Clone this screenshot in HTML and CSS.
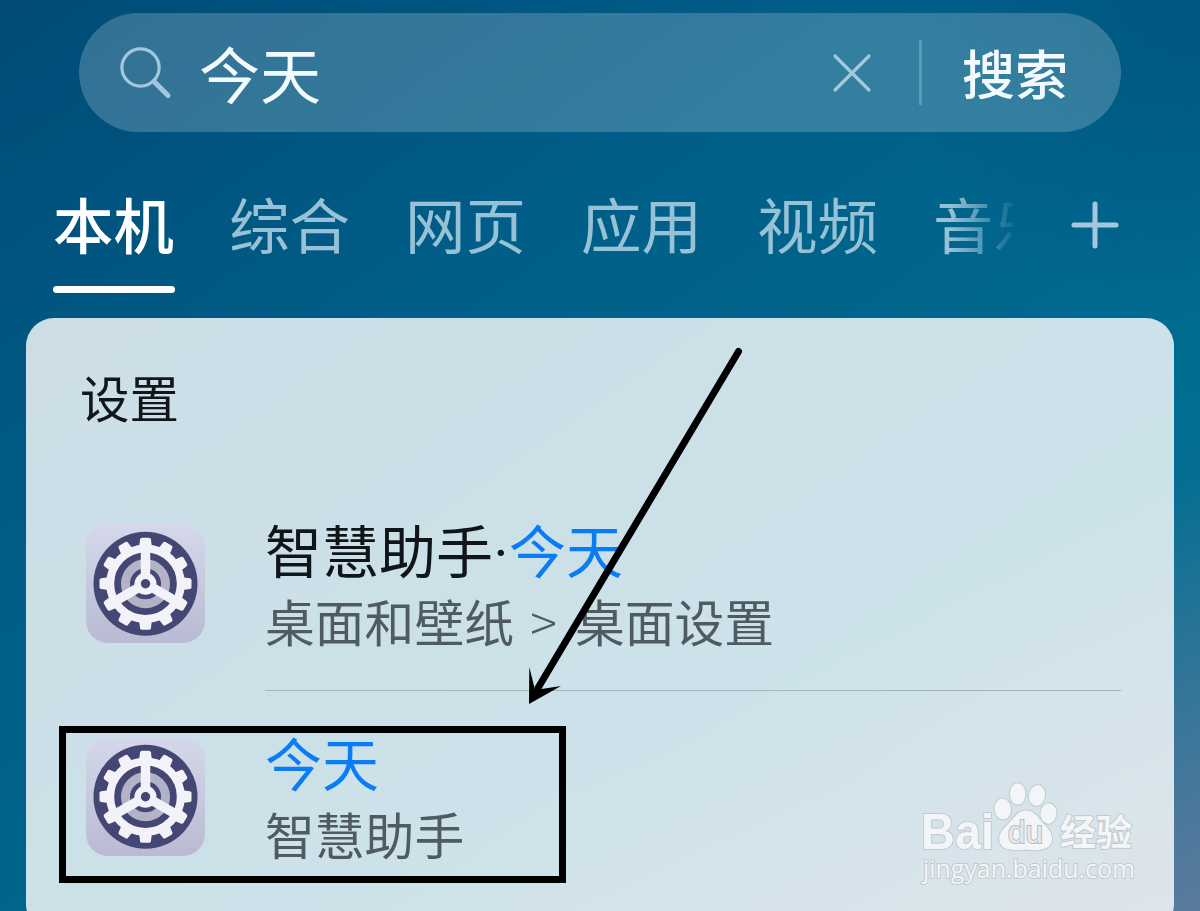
FILE: index.html
```html
<!DOCTYPE html>
<html lang="zh-CN">
  <head>
    <meta charset="UTF-8" />
    <title>今天 - 搜索</title>
    <link rel="stylesheet" href="styles.css">
  </head>
  <body>
    <svg class="defs" width="0" height="0">
      <defs>
        <linearGradient id="tile" x1="0" y1="0" x2="0" y2="1">
          <stop offset="0" stop-color="#d5d8ea" />
          <stop offset="1" stop-color="#b9bad3" />
        </linearGradient>
        <path id="tooth" d="M-6.4 -37 L-5.4 -44.5 Q-5 -46 -3.5 -46 H3.5 Q5 -46 5.4 -44.5 L6.4 -37 Z" />
        <symbol id="gear" viewBox="0 0 119 119">
          <rect width="119" height="119" rx="22" fill="url(#tile)" />
          <g transform="translate(59.5 59.7)">
            <circle r="52" fill="#444673" />
            <circle r="20" fill="none" stroke="#b3b3c8" stroke-width="9" />
            <g fill="#f3f2f8">
              <use href="#tooth" />
              <use href="#tooth" transform="rotate(30)" />
              <use href="#tooth" transform="rotate(60)" />
              <use href="#tooth" transform="rotate(90)" />
              <use href="#tooth" transform="rotate(120)" />
              <use href="#tooth" transform="rotate(150)" />
              <use href="#tooth" transform="rotate(180)" />
              <use href="#tooth" transform="rotate(210)" />
              <use href="#tooth" transform="rotate(240)" />
              <use href="#tooth" transform="rotate(270)" />
              <use href="#tooth" transform="rotate(300)" />
              <use href="#tooth" transform="rotate(330)" />
            </g>
            <circle r="35.3" fill="none" stroke="#f3f2f8" stroke-width="8" />
            <path d="M0 -34V0M0 0L-29.4 17M0 0L29.4 17" stroke="#f3f2f8" stroke-width="9.5" />
            <circle r="11" fill="#f3f2f8" />
            <circle r="4.7" fill="#444673" />
          </g>
        </symbol>
      </defs>
    </svg>

    <div class="search">
      <svg class="search-icon" width="54" height="54" viewBox="0 0 54 54">
        <circle cx="21.5" cy="21.5" r="18.6" />
        <path class="handle" d="M35 35.5L49 49.5" />
      </svg>
      <div class="query">今天</div>
      <svg class="clear" width="40" height="40" viewBox="0 0 40 40">
        <path d="M3 3L37 37M37 3L3 37" />
      </svg>
      <div class="separator"></div>
      <div class="search-button">搜索</div>
    </div>

    <div class="tabs">
      <div class="tab-list">
        <div class="tab active">本机</div>
        <div class="tab">综合</div>
        <div class="tab">网页</div>
        <div class="tab">应用</div>
        <div class="tab">视频</div>
        <div class="tab">音乐</div>
      </div>
      <svg class="add" width="48" height="48" viewBox="0 0 48 48">
        <path d="M24 3V45M3 24H45" />
      </svg>
    </div>

    <div class="panel">
      <div class="panel-title">设置</div>
      <div class="row">
        <svg class="app-icon"><use href="#gear" /></svg>
        <div class="row-text">
          <div class="name">智慧助手<span class="dot">·</span><span class="match">今天</span></div>
          <div class="path">桌面和壁纸 <span class="arrow-text">&gt;</span> 桌面设置</div>
        </div>
      </div>
      <div class="row">
        <svg class="app-icon"><use href="#gear" /></svg>
        <div class="row-text">
          <div class="name"><span class="match">今天</span></div>
          <div class="path">智慧助手</div>
        </div>
      </div>
    </div>

    <!-- annotations -->
    <div class="highlight"></div>
    <svg class="pointer" width="230" height="370" viewBox="0 0 230 370">
      <path class="shaft" d="M218.5 11.5L18 348" />
      <path d="M9 364L9.3 327L15 350L41 346Z" />
    </svg>

    <svg class="watermark" width="250" height="130" viewBox="0 0 250 130">
      <g class="mark">
        <text class="bai" x="11" y="79" textLength="73" lengthAdjust="spacingAndGlyphs">Bai</text>
        <ellipse cx="92.8" cy="39" rx="8.2" ry="10.5" transform="rotate(-8 92.8 39)" />
        <ellipse cx="107.7" cy="24" rx="7.8" ry="10.8" />
        <ellipse cx="127" cy="25.5" rx="8" ry="10.5" transform="rotate(12 127 25.5)" />
        <ellipse cx="138.5" cy="43.5" rx="8" ry="10.2" transform="rotate(8 138.5 43.5)" />
        <path d="M116 40.5C125 40.5 128 48 133 53C138 58 143 63 142 71C140 79 131 81.5 116 79.5C100 81.5 91 79 89.5 71C88 63 94 58 99 53C104 48 107 40.5 116 40.5Z" />
        <text class="du" x="98" y="73" textLength="35" lengthAdjust="spacingAndGlyphs">du</text>
        <text class="jingyan" x="150" y="76" textLength="72" lengthAdjust="spacingAndGlyphs">经验</text>
        <text class="url" x="13" y="108" textLength="212" lengthAdjust="spacingAndGlyphs">jingyan.baidu.com</text>
      </g>
    </svg>
  </body>
</html>
```

FILE: styles.css
```css
html,
body {
  margin: 0;
  padding: 0;
}

body {
  position: relative;
  width: 1200px;
  height: 911px;
  overflow: hidden;
  font-family: "Noto Sans CJK SC", sans-serif;
  background:
    linear-gradient(155deg, rgba(90, 122, 157, 0) 70%, #5a7a9d 100%),
    radial-gradient(circle at 1200px 0, rgba(0, 75, 120, 0.55), rgba(0, 75, 120, 0) 320px),
    linear-gradient(145deg, #004b78 0%, #005580 18%, #005e88 34%, #00658c 52%, #006d92 70%, #1a7492 100%);
}

.defs {
  position: absolute;
}

.search {
  display: flex;
  align-items: center;
  box-sizing: border-box;
  height: 119px;
  margin: 13px 79px 0;
  padding: 0 53px 0 40px;
  border-radius: 60px;
  background: rgba(255, 255, 255, 0.2);
  color: #f2faff;
}

.search svg,
.add {
  flex: none;
  fill: none;
  stroke: #a3c8de;
  stroke-width: 3.2;
  stroke-linecap: round;
}

.search .handle {
  stroke-width: 5;
}

.query {
  flex: 1;
  margin-left: 26px;
  font-size: 61px;
  line-height: 117px;
}

.separator {
  width: 3px;
  height: 65px;
  margin: 0 40px 0 47px;
  background: #5b9bb9;
}

.search-button {
  margin-top: -2px;
  font-size: 53px;
  font-weight: 500;
}

.tabs {
  display: flex;
  height: 186px;
}

.tab-list {
  display: flex;
  gap: 54px;
  width: 1013px;
  margin-right: 5px;
  padding-left: 53px;
  box-sizing: border-box;
  overflow: hidden;
  -webkit-mask-image: linear-gradient(to right, #000 950px, transparent 1020px);
  mask-image: linear-gradient(to right, #000 950px, transparent 1020px);
}

.tab {
  flex: none;
  width: 122px;
  height: 154px;
  margin-top: 5px;
  box-sizing: border-box;
  padding-top: 42px;
  font-size: 60.5px;
  line-height: 88px;
  color: #97c2d6;
}

.tab.active {
  color: #fff;
  font-weight: 500;
}

.tab.active::after {
  content: "";
  display: block;
  height: 7px;
  margin-top: 19px;
  border-radius: 4px;
  background: #fff;
}

.add {
  margin: 69px 0 0 53px;
  stroke-width: 5;
}

.panel {
  height: 614px;
  margin: 0 26px;
  border-radius: 28px;
  background: rgba(255, 255, 255, 0.8);
}

.panel-title {
  height: 159px;
  padding-left: 54px;
  font-size: 49.5px;
  line-height: 158px;
  color: #10161a;
}

.row {
  display: flex;
  align-items: center;
  position: relative;
  height: 213px;
  padding-left: 60px;
}

.row + .row::before {
  content: "";
  position: absolute;
  top: 0;
  left: 239px;
  right: 53px;
  height: 1px;
  background: #a3b4ba;
}

.app-icon {
  width: 119px;
  height: 119px;
}

.row-text {
  padding-top: 1px;
  margin-left: 60px;
  white-space: nowrap;
}

.name {
  font-size: 57px;
  line-height: 72px;
  color: #0f1519;
}

.dot {
  display: inline-block;
  width: 16px;
  font-family: Roboto, sans-serif;
  line-height: 40px;
  text-align: center;
}

.match {
  color: #0a7cf5;
}

.path {
  font-size: 49.8px;
  line-height: 72px;
  color: #4f5b60;
}

.arrow-text {
  margin: 0 7px 0 5px;
  font-weight: 300;
}

.highlight {
  position: absolute;
  left: 59px;
  top: 726px;
  width: 507px;
  height: 157px;
  box-sizing: border-box;
  border: 7px solid #000;
}

.pointer {
  position: absolute;
  left: 520px;
  top: 340px;
}

.shaft {
  stroke: #000;
  stroke-width: 7;
  stroke-linecap: round;
}

.watermark {
  position: absolute;
  left: 910px;
  top: 770px;
}

.mark {
  fill: #f3f6f8;
  stroke: #c3cacf;
  stroke-width: 2;
  paint-order: stroke;
}

.bai {
  font: bold 50px "Liberation Sans", sans-serif;
}

.du {
  font: 32px "Liberation Sans", sans-serif;
  fill: #e6eaee;
  stroke: #b4bcc3;
}

.jingyan {
  font: bold 36px "Noto Sans CJK SC", sans-serif;
}

.url {
  font: 25px "Open Sans", sans-serif;
}
```
